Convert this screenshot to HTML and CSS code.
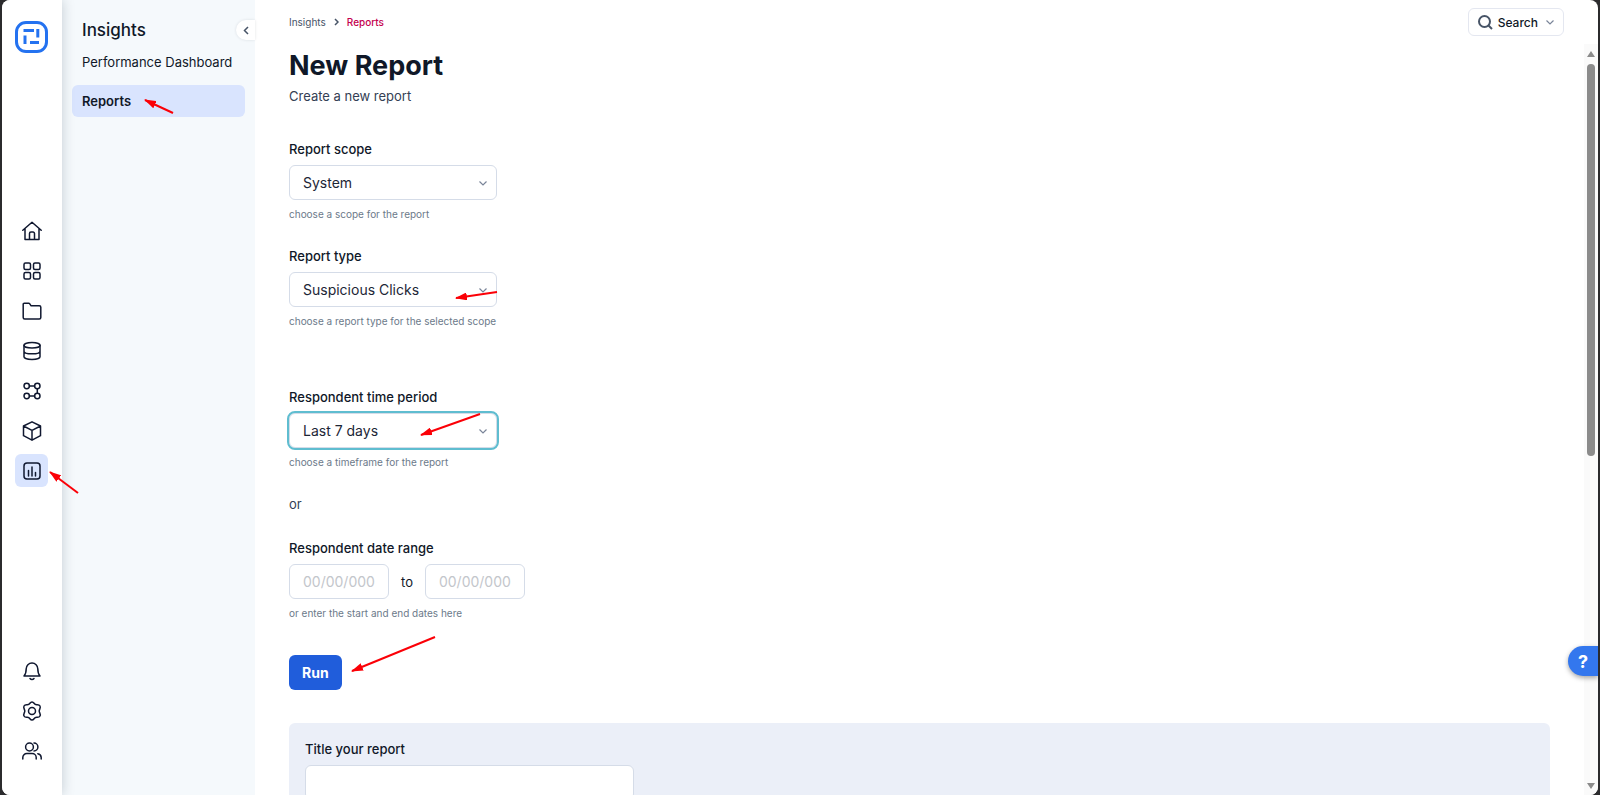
FILE: index.html
```html
<!DOCTYPE html>
<html lang="en">
  <head>
    <meta charset="UTF-8" />
    <meta name="viewport" content="width=device-width, initial-scale=1.0" />
    <title>New Report</title>
    <link rel="stylesheet" href="styles.css">
  </head>
  <body>
    <div class="app">
      <nav class="rail" aria-label="Main">
        <a class="logo" href="#" aria-label="Home page">
          <svg width="33" height="32" viewBox="0 0 33 32" fill="none" stroke="#2472f0" stroke-width="3">
            <rect x="1.5" y="1.5" width="30" height="29" rx="9.5" />
            <path d="M8.500 9.500H19M10 14.500V23M22.800 8v8.500M15 21.500h9" />
          </svg>
        </a>
        <div class="rail-group rail-main">
          <a class="rail-link" href="#" aria-label="Home">
            <svg class="icon" viewBox="0 0 20 20"><path d="M.8 9.300 10 1.200l9.200 8.100M3 7.500v11h14v-11M7.500 18.500v-6a1.500 1.500 0 0 1 1.500-1.500h2a1.500 1.500 0 0 1 1.500 1.500v6" /></svg>
          </a>
          <a class="rail-link" href="#" aria-label="Apps">
            <svg class="icon" viewBox="0 0 20 20"><rect x="2" y="2" width="6.500" height="6.500" rx="1.500" /><rect x="11.500" y="2" width="6.500" height="6.500" rx="1.500" /><rect x="2" y="11.500" width="6.500" height="6.500" rx="1.500" /><rect x="11.500" y="11.500" width="6.500" height="6.500" rx="1.500" /></svg>
          </a>
          <a class="rail-link" href="#" aria-label="Files">
            <svg class="icon" viewBox="0 0 20 20"><path d="M1.200 16.500V3.200a1 1 0 0 1 1-1h4.600a1 1 0 0 1 .8.4l1.500 2.200h8.200a1.500 1.500 0 0 1 1.500 1.500v10.200a1.500 1.500 0 0 1-1.500 1.500H2.700a1.500 1.500 0 0 1-1.500-1.500z" /></svg>
          </a>
          <a class="rail-link" href="#" aria-label="Data">
            <svg class="icon" viewBox="0 0 20 20"><ellipse cx="10" cy="4.300" rx="8" ry="2.800" /><path d="M2 4.300v11.500c0 1.500 3.600 2.700 8 2.700s8-1.200 8-2.700V4.300M2 10.200c0 1.500 3.600 2.600 8 2.600s8-1.100 8-2.600" /></svg>
          </a>
          <a class="rail-link" href="#" aria-label="Workflows">
            <svg class="icon" viewBox="0 0 20 20"><circle cx="4.700" cy="5" r="2.700" /><circle cx="15.300" cy="5" r="2.700" /><circle cx="4.700" cy="15" r="2.700" /><circle cx="15.300" cy="15" r="2.700" /><path d="M7.400 5h5.200M7.400 15h5.200M15.300 7.700v4.600" /></svg>
          </a>
          <a class="rail-link" href="#" aria-label="Packages">
            <svg class="icon" viewBox="0 0 20 20"><path d="M10 .8 18.500 5v9.700L10 19.200 1.500 14.700V5zM1.500 5l8.500 4.400L18.500 5M10 9.400v9.800" /></svg>
          </a>
          <a class="rail-link active" href="#" aria-label="Insights" aria-current="page">
            <svg class="icon" viewBox="0 0 20 20"><rect x="2" y="2" width="16" height="16" rx="3" /><path d="M6.500 9.500v5.500M10 6v9M13.500 11.500V15" /></svg>
          </a>
        </div>
        <div class="rail-group">
          <a class="rail-link" href="#" aria-label="Notifications">
            <svg class="icon" viewBox="0 0 20 20"><path d="M2 15h16c-1.700-1.800-2.200-3.500-2.200-7.200a5.800 5.800 0 0 0-11.600 0C4.200 11.500 3.700 13.200 2 15zM8 17.500c1 1.200 3 1.200 4 0" /></svg>
          </a>
          <a class="rail-link" href="#" aria-label="Settings">
            <svg class="icon" viewBox="0 0 20 20"><path d="M6.300 3.600C8 3.200 8 .9 10 .9s2 2.300 3.700 2.700 3.300-.6 4.300 1.400-.8 3.300-.8 5 1.800 3 .8 5-2.600 1-4.300 1.400-1.700 2.700-3.700 2.700-2-2.300-3.700-2.700-3.300.6-4.300-1.400.8-3.300.8-5-1.800-3-.8-5 2.600-1 4.300-1.400z" /><circle cx="10" cy="10" r="3.500" /></svg>
          </a>
          <a class="rail-link" href="#" aria-label="Users">
            <svg class="icon" viewBox="0 0 20 20"><circle cx="7.500" cy="6" r="3.900" /><path d="M.8 18v-1.500a4 4 0 0 1 4-4h5.400a4 4 0 0 1 4 4V18M12 2.100a3.900 3.900 0 0 1 0 7.800M15.800 12.700a4 4 0 0 1 3.400 3.800V18" /></svg>
          </a>
        </div>
      </nav>

      <aside class="subnav">
        <div class="subnav-head">
          <h2>Insights</h2>
          <button class="collapse" type="button" aria-label="Collapse menu">
            <svg width="6" height="9" viewBox="0 0 6 9"><path d="M5 1 1.500 4.500 5 8" /></svg>
          </button>
        </div>
        <a class="subnav-link" href="#">Performance Dashboard</a>
        <a class="subnav-link active" href="#">Reports</a>
      </aside>

      <main class="main">
        <header class="topbar">
          <nav class="breadcrumb" aria-label="Breadcrumb">
            <a href="#">Insights</a>
            <svg width="5" height="8" viewBox="0 0 5 8"><path d="M1 1l3 3-3 3" /></svg>
            <a class="current" href="#">Reports</a>
          </nav>
          <button class="search" type="button">
            <svg class="search-icon" width="15" height="15" viewBox="0 0 15 15"><circle cx="6.500" cy="6.500" r="5.500" /><path d="M10.500 10.500l3.500 3.500" /></svg>
            Search
            <svg class="chevron" width="8" height="5" viewBox="0 0 8 5"><path d="M.5.5 4 4 7.500.5" /></svg>
          </button>
        </header>

        <div class="page">
          <form class="content">
            <h1>New Report</h1>
            <p class="subtitle">Create a new report</p>

            <div class="field">
              <label for="scope">Report scope</label>
              <div class="select">
                <select id="scope"><option>System</option></select>
                <svg class="chevron" width="8" height="5" viewBox="0 0 8 5"><path d="M.5.5 4 4 7.500.5" /></svg>
              </div>
              <p class="help">choose a scope for the report</p>
            </div>

            <div class="field field-last">
              <label for="type">Report type</label>
              <div class="select">
                <select id="type"><option>Suspicious Clicks</option></select>
                <svg class="chevron" width="8" height="5" viewBox="0 0 8 5"><path d="M.5.5 4 4 7.500.5" /></svg>
              </div>
              <p class="help">choose a report type for the selected scope</p>
            </div>

            <div class="field">
              <label for="period">Respondent time period</label>
              <div class="select focused">
                <select id="period"><option>Last 7 days</option></select>
                <svg class="chevron" width="8" height="5" viewBox="0 0 8 5"><path d="M.5.5 4 4 7.500.5" /></svg>
              </div>
              <p class="help">choose a timeframe for the report</p>
            </div>

            <p class="or">or</p>

            <div class="field">
              <label for="start">Respondent date range</label>
              <div class="range">
                <input id="start" type="text" placeholder="00/00/0000" />
                <label for="end">to</label>
                <input id="end" type="text" placeholder="00/00/0000" />
              </div>
              <p class="help">or enter the start and end dates here</p>
            </div>

            <button class="run" type="button">Run</button>

            <section class="panel">
              <label for="title">Title your report</label>
              <input id="title" type="text" />
            </section>
          </form>

          <div class="scrollbar" aria-hidden="true">
            <svg width="8" height="6" viewBox="0 0 8 6"><path d="M4 0l4 6H0z" /></svg>
            <div class="track"><div class="thumb"></div></div>
            <svg width="8" height="6" viewBox="0 0 8 6"><path d="M0 0h8L4 6z" /></svg>
          </div>
        </div>
      </main>

      <button class="help-button" type="button" aria-label="Help">?</button>
    </div>

    <!-- callout arrows -->
    <svg class="arrows" width="520" height="700" viewBox="0 0 520 700" aria-hidden="true">
      <defs>
        <marker id="head" viewBox="0 0 12 8" refX="11" refY="4" markerWidth="12" markerHeight="8" markerUnits="userSpaceOnUse" orient="auto">
          <path d="M0 0l12 4L0 8z" />
        </marker>
      </defs>
      <path d="M173 113l-28-13" />
      <path d="M78 493l-28-21" />
      <path d="M497 292l-41 6" />
      <path d="M480 414l-59 21" />
      <path d="M435 637l-83 34" />
    </svg>
  </body>
</html>
```

FILE: styles.css
```css
* {
  box-sizing: border-box;
}

body {
  margin: 0;
  background: #2b2b2d;
  color: #101828;
  font-family: Inter, "Liberation Sans", sans-serif;
  font-size: 13px;
  line-height: 16px;
}

h1, h2, p {
  margin: 0;
}

a {
  color: inherit;
  text-decoration: none;
}

button, input, select {
  font-family: inherit;
}

svg {
  display: block;
}

.app {
  position: relative;
  display: flex;
  height: 100vh;
  margin: 0 2px;
  overflow: hidden;
  border-radius: 8px;
  background: #fff;
}

/* icon rail */
.rail {
  position: relative;
  z-index: 1;
  display: flex;
  flex-direction: column;
  justify-content: space-between;
  align-items: center;
  width: 60px;
  padding: 21px 1px 28px 0;
  background: #fff;
  box-shadow: 0 0 12px rgba(16, 40, 60, 0.22);
}

.rail-group {
  display: flex;
  flex-direction: column;
  gap: 7px;
}

.rail-main {
  padding-bottom: 6px;
}

.rail-link {
  display: grid;
  place-items: center;
  width: 33px;
  height: 33px;
  border-radius: 6px;
}

.rail-link.active {
  background: #d9e4fe;
}

.icon {
  width: 20px;
  height: 20px;
  fill: none;
  stroke: #101830;
  stroke-width: 1.5;
  stroke-linecap: round;
  stroke-linejoin: round;
}

/* second level menu */
.subnav {
  width: 193px;
  padding: 20px 0 0 10px;
  background: #f5f9fc;
}

.subnav-head {
  display: flex;
  justify-content: space-between;
  align-items: center;
  margin-bottom: 6px;
  padding-left: 10px;
}

.subnav h2 {
  font-size: 17px;
  font-weight: 500;
  line-height: 20px;
}

.collapse {
  display: grid;
  place-items: center;
  width: 19px;
  height: 20px;
  padding: 0;
  border: 0;
  border-radius: 10px 0 0 10px;
  background: #fff;
  box-shadow: 0 0 3px rgba(16, 24, 40, 0.12);
}

.collapse path,
.breadcrumb path {
  fill: none;
  stroke: #475467;
  stroke-width: 1.5;
}

.subnav-link {
  display: block;
  margin: 0 10px 7px 0;
  padding: 8px 10px;
  border-radius: 6px;
}

.subnav-link.active {
  background: #d9e4fe;
  font-weight: 600;
}

/* main area */
.main {
  display: flex;
  flex: 1;
  flex-direction: column;
  min-width: 0;
}

.topbar {
  display: flex;
  justify-content: space-between;
  align-items: center;
  height: 44px;
  padding: 0 34px;
}

.breadcrumb {
  display: flex;
  align-items: center;
  gap: 8px;
  color: #475467;
  font-size: 10px;
}

.breadcrumb .current {
  color: #c4004e;
  font-weight: 500;
}

.search {
  display: flex;
  align-items: center;
  gap: 5px;
  height: 28px;
  padding: 0 9px;
  border: 1px solid #e4e7f0;
  border-radius: 6px;
  background: #fff;
  color: #101828;
  font-size: 12px;
  font-weight: 500;
}

.search-icon {
  fill: none;
  stroke: #475467;
  stroke-width: 2;
}

.search .chevron {
  margin-left: 3px;
}

.chevron {
  fill: none;
  stroke: #7a8599;
  stroke-width: 1.2;
}

.page {
  display: flex;
  flex: 1;
  min-height: 0;
}

.content {
  flex: 1;
  padding: 6px 34px 0;
  overflow: hidden;
}

h1 {
  font-size: 27px;
  font-weight: 700;
  line-height: 32px;
}

.subtitle {
  margin: 6px 0 37px;
  color: #344054;
}

.field {
  margin-bottom: 28px;
}

.field-last {
  margin-bottom: 62px;
}

.field > label,
.panel label {
  display: block;
  margin-bottom: 8px;
  color: #101828;
  font-weight: 500;
}

.select {
  position: relative;
  width: 208px;
}

.select select,
.content input {
  display: block;
  width: 100%;
  height: 35px;
  padding: 0 13px;
  border: 1px solid #d5dce8;
  border-radius: 6px;
  background: #fff;
  color: #1d2636;
  font-size: 14px;
  appearance: none;
}

.select .chevron {
  position: absolute;
  top: 16px;
  right: 10px;
}

.focused select {
  outline: 2px solid #5fbdd0;
}

.help {
  margin-top: 8px;
  color: #6c7a8a;
  font-size: 10px;
  line-height: 12px;
}

.or {
  margin-bottom: 28px;
  color: #344054;
}

.range {
  display: flex;
  align-items: center;
  gap: 12px;
}

.content .range input {
  width: 100px;
}

.content input::placeholder {
  color: #c3c6cb;
}

.run {
  display: block;
  height: 35px;
  margin: 36px 0 33px;
  padding: 0 13px;
  border: 0;
  border-radius: 6px;
  background: #205ddb;
  color: #fff;
  font-size: 14px;
  font-weight: 700;
}

.panel {
  height: 160px;
  padding: 18px 16px;
  border-radius: 6px;
  background: #ebeff8;
}

.content .panel input {
  width: 329px;
}

/* scrollbar */
.scrollbar {
  display: flex;
  flex-direction: column;
  align-items: center;
  gap: 7px;
  width: 14px;
  padding: 7px 0 6px;
  background: #fafafa;
  fill: #8b8b8b;
}

.track {
  flex: 1;
  width: 8px;
}

.thumb {
  height: 55%;
  border-radius: 4px;
  background: #8b8b8b;
}

.help-button {
  position: absolute;
  right: 0;
  bottom: 119px;
  width: 30px;
  height: 30px;
  padding: 0;
  border: 0;
  border-radius: 15px 0 0 15px;
  background: #3377ee;
  box-shadow: 0 2px 5px rgba(0, 0, 0, 0.35);
  color: #fff;
  font-size: 18px;
  font-weight: 700;
}

.arrows {
  position: absolute;
  top: 0;
  left: 0;
  z-index: 2;
  pointer-events: none;
}

.arrows > path {
  stroke: #fb0007;
  stroke-width: 2;
  marker-end: url(#head);
}

.arrows marker path {
  fill: #fb0007;
}
```
